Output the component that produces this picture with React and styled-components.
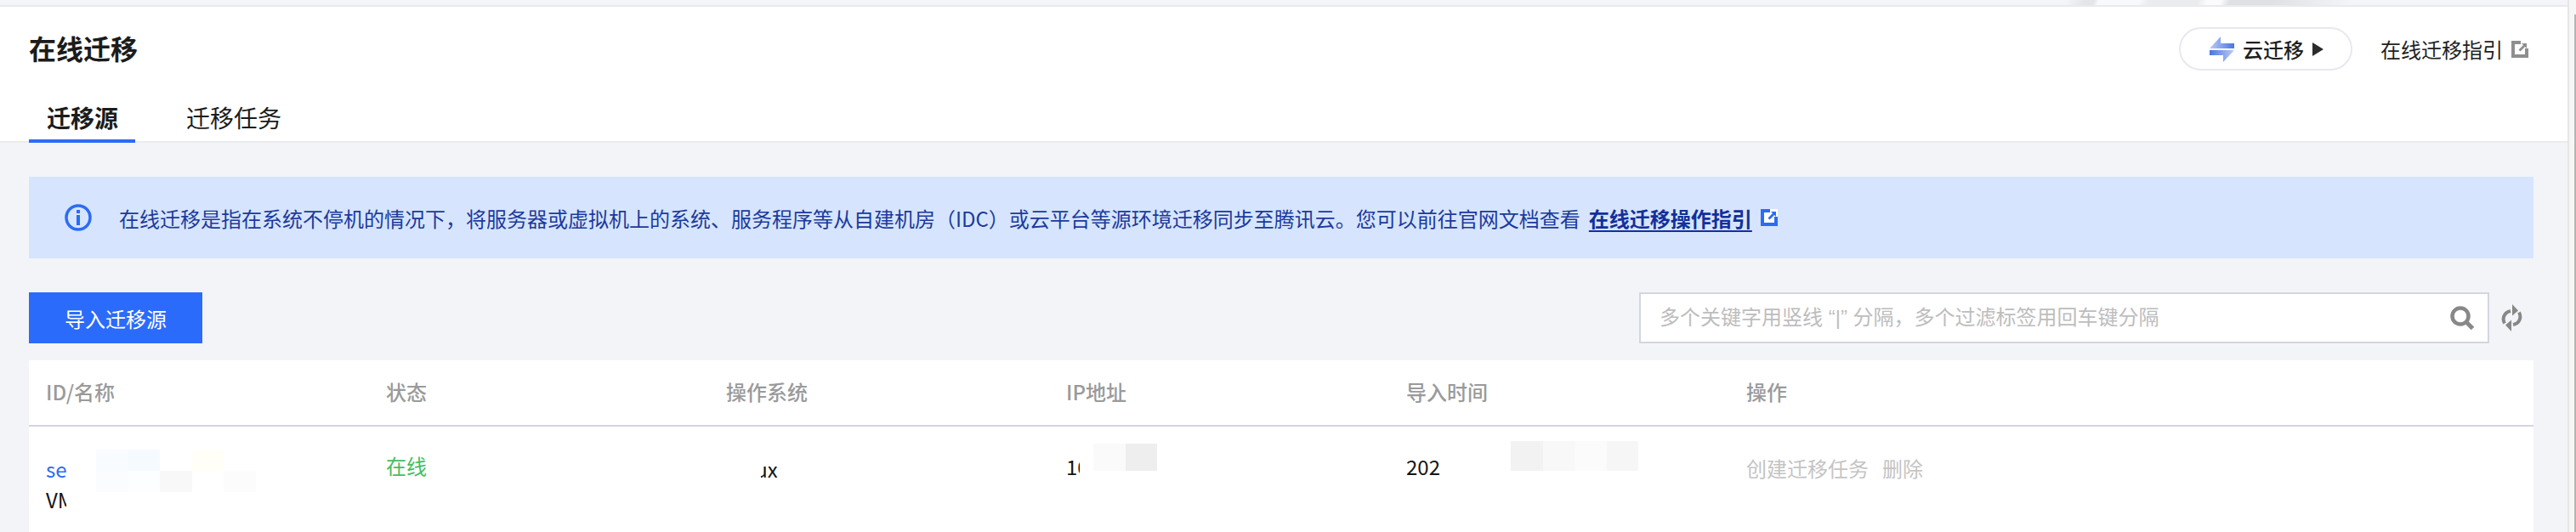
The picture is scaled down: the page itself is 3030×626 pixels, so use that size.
import React from 'react';
import styled, { createGlobalStyle } from 'styled-components';

const GlobalStyles = createGlobalStyle`
  html, body {
    margin: 0;
    padding: 0;
    height: 100%;
    overflow: hidden;
    background-color: #f2f4f8;
    font-family: "Noto Sans CJK SC", "Noto Sans", sans-serif;
  }
  * { box-sizing: border-box; }
`;

const Shell = styled.div`
  display: flex;
  width: 3030px;
  height: 626px;
  overflow: hidden;
`;

const Main = styled.div`
  width: 3020px;
  display: flex;
  flex-direction: column;
`;

const Gutter = styled.div`
  width: 10px;
  display: flex;
  justify-content: flex-end;
  padding-top: 17px;
  background-color: #f6f6f6;
  border-left: 2px solid #e6e6e6;
`;

const GutterThumb = styled.div`
  width: 2px;
  background-color: #b5b5b5;
`;

const TopStrip = styled.div`
  height: 8px;
  flex: none;
  border-bottom: 2px solid #e9e9f0;
  background: linear-gradient(110deg, #f4f5f8 0 2285px, #e4e5e7 2305px 2315px, #f8f9fa 2320px 2365px, #ebecee 2375px 2430px, #fbfbfc 2440px 2455px, #dfe0e2 2465px 2510px, #f4f5f8 2600px);
`;

const Header = styled.header`
  flex: none;
  height: 160px;
  padding: 24px 46px 0 34px;
  background-color: #ffffff;
  border-bottom: 2px solid #eaebef;
`;

const TitleRow = styled.div`
  display: flex;
  align-items: center;
  justify-content: space-between;
  height: 51px;
`;

const Title = styled.h1`
  margin: 0 0 3px;
  font-size: 32px;
  font-weight: 700;
  color: #1c1c1c;
`;

const HeaderActions = styled.div`
  display: flex;
  align-items: center;
`;

const CloudPill = styled.button`
  display: flex;
  align-items: center;
  width: 204px;
  height: 51px;
  padding: 0 0 0 34px;
  background: #ffffff;
  border: 2px solid #e8e8f0;
  border-radius: 26px;
  font: inherit;
  font-size: 24px;
  font-weight: 500;
  color: #1f1f1f;
`;

const PillLabel = styled.span`
  margin-left: 10px;
`;

const PillCaret = styled.span`
  width: 0;
  height: 0;
  margin-left: 10px;
  border-style: solid;
  border-width: 8px 0 8px 13px;
  border-color: transparent transparent transparent #2c2c2c;
`;

const GuideLink = styled.a`
  display: flex;
  align-items: center;
  margin-left: 33px;
  font-size: 24px;
  color: #222222;
`;

const LinkIcon = styled.svg`
  width: 20px;
  height: 20px;
  margin-left: ${(p) => p.$gap}px;
  flex: none;
`;

const Tabs = styled.nav`
  display: flex;
  gap: 39px;
  margin-top: 33px;
`;

const Tab = styled.div`
  height: 52px;
  padding: 0 20px 4px 21px;
  display: flex;
  align-items: center;
  font-size: 28px;
  font-weight: ${(p) => (p.$active ? 700 : 400)};
  color: #1c1c1c;
  border-bottom: 4px solid ${(p) => (p.$active ? '#2d6bf6' : 'transparent')};
`;

const Content = styled.main`
  flex: 1;
  display: flex;
  flex-direction: column;
  padding: 40px 40px 0 34px;
`;

const Notice = styled.div`
  display: flex;
  align-items: center;
  height: 96px;
  padding-left: 42px;
  background-color: #d6e5fd;
  font-size: 24px;
  color: #1c3a9e;
`;

const InfoIcon = styled.svg`
  width: 32px;
  height: 32px;
  margin-right: 32px;
  flex: none;
`;

const NoticeLink = styled.a`
  margin-left: 10px;
  font-weight: 700;
  color: #12309c;
  text-decoration: underline;
  text-underline-offset: 4px;
`;

const Toolbar = styled.div`
  display: flex;
  align-items: center;
  justify-content: space-between;
  height: 60px;
  margin-top: 40px;
`;

const PrimaryButton = styled.button`
  width: 204px;
  height: 60px;
  border: none;
  background-color: #2b6bfb;
  color: #ffffff;
  font: inherit;
  font-size: 24px;
`;

const SearchArea = styled.div`
  display: flex;
  align-items: center;
  gap: 14px;
  margin-right: 13px;
`;

const SearchBox = styled.div`
  display: flex;
  align-items: center;
  width: 1000px;
  height: 60px;
  padding: 0 16px 0 22px;
  background-color: #ffffff;
  border: 2px solid #d3d6e0;
`;

const SearchInput = styled.input`
  flex: 1;
  border: none;
  outline: none;
  padding: 0;
  background: transparent;
  font-family: "Liberation Sans", "Noto Sans CJK SC", sans-serif;
  font-size: 24px;
  &::placeholder {
    color: #bdbdbd;
    opacity: 1;
  }
`;

const ToolIcon = styled.svg`
  flex: none;
  display: block;
`;

const TableCard = styled.section`
  flex: 1;
  margin-top: 20px;
  background-color: #ffffff;
`;

const TableRow = styled.div`
  display: grid;
  grid-template-columns: repeat(5, 400px) 1fr;
`;

const HeadRow = styled(TableRow)`
  height: 78px;
  border-bottom: 2px solid #d3d6e0;
`;

const HeadCell = styled.div`
  display: flex;
  align-items: center;
  padding: 0 20px 4px;
  font-size: 24px;
  font-weight: 500;
  color: #9a9a9a;
`;

const Cell = styled.div`
  position: relative;
  padding: ${(p) => p.$top || 30}px 0 0 20px;
  font-size: 24px;
  line-height: 36px;
  color: #151515;
`;

const NameLink = styled.a`
  display: block;
  color: #2d6bf6;
`;

const StatusText = styled.span`
  color: #45bd62;
`;

const ActionLink = styled.a`
  margin-right: 16px;
  color: #c4c4c4;
`;

// white patch lying over the hidden part of a value
const Cover = styled.div`
  position: absolute;
  left: ${(p) => p.$x}px;
  top: ${(p) => p.$y}px;
  width: ${(p) => p.$w}px;
  height: ${(p) => p.$h}px;
  background-color: #ffffff;
`;

// blurred tiles lying over the hidden part of a value
const Mosaic = styled.div`
  position: absolute;
  left: ${(p) => p.$x}px;
  top: ${(p) => p.$y}px;
  display: grid;
  grid-template-columns: repeat(${(p) => p.$cols}, 37.5px);
  grid-auto-rows: ${(p) => p.$rowHeight};
`;

const MosaicTile = styled.div`
  background-color: ${(p) => p.$color};
`;

const columns = ['ID/名称', '状态', '操作系统', 'IP地址', '导入时间', '操作'];

const ExternalIcon = ({ color, gap }) => (
  <LinkIcon $gap={gap} viewBox="0 0 20 20">
    <path fill={color} d="M0 0h20v20H0z" />
    <path fill="#fff" d="M4 4h7v-4h9v9h-4v7H4z" />
    <path fill={color} d="M12 3h6v6l-2-2-5.500 5.500-2-2L14 5z" />
  </LinkIcon>
);

const MosaicBlock = ({ x, y, cols, rowHeight, colors }) => (
  <Mosaic $x={x} $y={y} $cols={cols} $rowHeight={rowHeight}>
    {colors.map((color, index) => (
      <MosaicTile key={index} $color={color} />
    ))}
  </Mosaic>
);

const App = () => (
  <Shell>
    <GlobalStyles />
    <Main>
      <TopStrip />
      <Header>
        <TitleRow>
          <Title>在线迁移</Title>
          <HeaderActions>
            <CloudPill>
              <svg width="29" height="30" viewBox="0 0 29 30">
                <defs>
                  <linearGradient id="swapTop" x1="0" x2="1" y1="0" y2="0">
                    <stop offset="0" stopColor="#bccdf4" />
                    <stop offset="1" stopColor="#4a74e0" />
                  </linearGradient>
                  <linearGradient id="swapBottom" x1="0" x2="1" y1="0" y2="0">
                    <stop offset="0" stopColor="#4a74e0" />
                    <stop offset="1" stopColor="#bccdf4" />
                  </linearGradient>
                </defs>
                <path fill="url(#swapTop)" d="M13 0v8h16v6H0z" />
                <path fill="url(#swapBottom)" d="M0 16h29L16 30v-8H0z" />
              </svg>
              <PillLabel>云迁移</PillLabel>
              <PillCaret />
            </CloudPill>
            <GuideLink>
              在线迁移指引
              <ExternalIcon color="#8f8f8f" gap={10} />
            </GuideLink>
          </HeaderActions>
        </TitleRow>
        <Tabs>
          <Tab $active>迁移源</Tab>
          <Tab>迁移任务</Tab>
        </Tabs>
      </Header>
      <Content>
        <Notice>
          <InfoIcon viewBox="0 0 32 32">
            <circle cx="16" cy="16" r="14" fill="none" stroke="#2d6bf6" strokeWidth="3.500" />
            <path fill="#2d6bf6" d="M14 7h4v4h-4zM14 13h4v12h-4z" />
          </InfoIcon>
          在线迁移是指在系统不停机的情况下，将服务器或虚拟机上的系统、服务程序等从自建机房（IDC）或云平台等源环境迁移同步至腾讯云。您可以前往官网文档查看
          <NoticeLink>在线迁移操作指引</NoticeLink>
          <ExternalIcon color="#2d6bf6" gap={10} />
        </Notice>
        <Toolbar>
          <PrimaryButton>导入迁移源</PrimaryButton>
          <SearchArea>
            <SearchBox>
              <SearchInput placeholder="多个关键字用竖线 “|” 分隔，多个过滤标签用回车键分隔" />
              <ToolIcon width="28" height="28" viewBox="0 0 28 28">
                <circle cx="12" cy="12" r="9.500" fill="none" stroke="#888" strokeWidth="4.500" />
                <path stroke="#888" strokeWidth="5" d="M18 18l8.500 8.500" />
              </ToolIcon>
            </SearchBox>
            <ToolIcon width="25" height="32" viewBox="0 0 25 32">
              <g fill="none" stroke="#888" strokeWidth="4">
                <path d="M4 22.500C1 17 3 9.500 11 8" />
                <path d="M21 9.500C24 15 22 22.500 14 24" />
              </g>
              <path fill="#888" d="M13 0l7 7.500-7 6zM12 32l-7-7.500 7-6z" />
            </ToolIcon>
          </SearchArea>
        </Toolbar>
        <TableCard>
          <HeadRow>
            {columns.map((column) => (
              <HeadCell key={column}>{column}</HeadCell>
            ))}
          </HeadRow>
          <TableRow>
            <Cell $top={32}>
              <NameLink>se</NameLink>
              VM
              <Cover $x={44} $y={30} $w={36} $h={70} />
              <MosaicBlock
                x={79}
                y={27}
                cols={5}
                rowHeight="25px"
                colors={['#f8fbff', '#f5faff', '#ffffff', '#fffff8', '#ffffff', '#fafcfd', '#fdfeff', '#f8f8f8', '#ffffff', '#fcfcfc']}
              />
            </Cell>
            <Cell $top={28}>
              <StatusText>在线</StatusText>
            </Cell>
            <Cell $top={32}>
              Linux
              <Cover $x={16} $y={30} $w={45} $h={38} />
            </Cell>
            <Cell $top={29}>
              10
              <Cover $x={36} $y={26} $w={16} $h={36} />
              <MosaicBlock x={52} y={20} cols={2} rowHeight="32px" colors={['#fafafa', '#eeeeee']} />
            </Cell>
            <Cell $top={29}>
              202
              <MosaicBlock x={143} y={17} cols={4} rowHeight="35px" colors={['#f2f2f2', '#f8f8f8', '#fbfbfb', '#f6f6f6']} />
            </Cell>
            <Cell $top={31}>
              <ActionLink>创建迁移任务</ActionLink>
              <ActionLink>删除</ActionLink>
            </Cell>
          </TableRow>
        </TableCard>
      </Content>
    </Main>
    <Gutter>
      <GutterThumb />
    </Gutter>
  </Shell>
);

export default App;
